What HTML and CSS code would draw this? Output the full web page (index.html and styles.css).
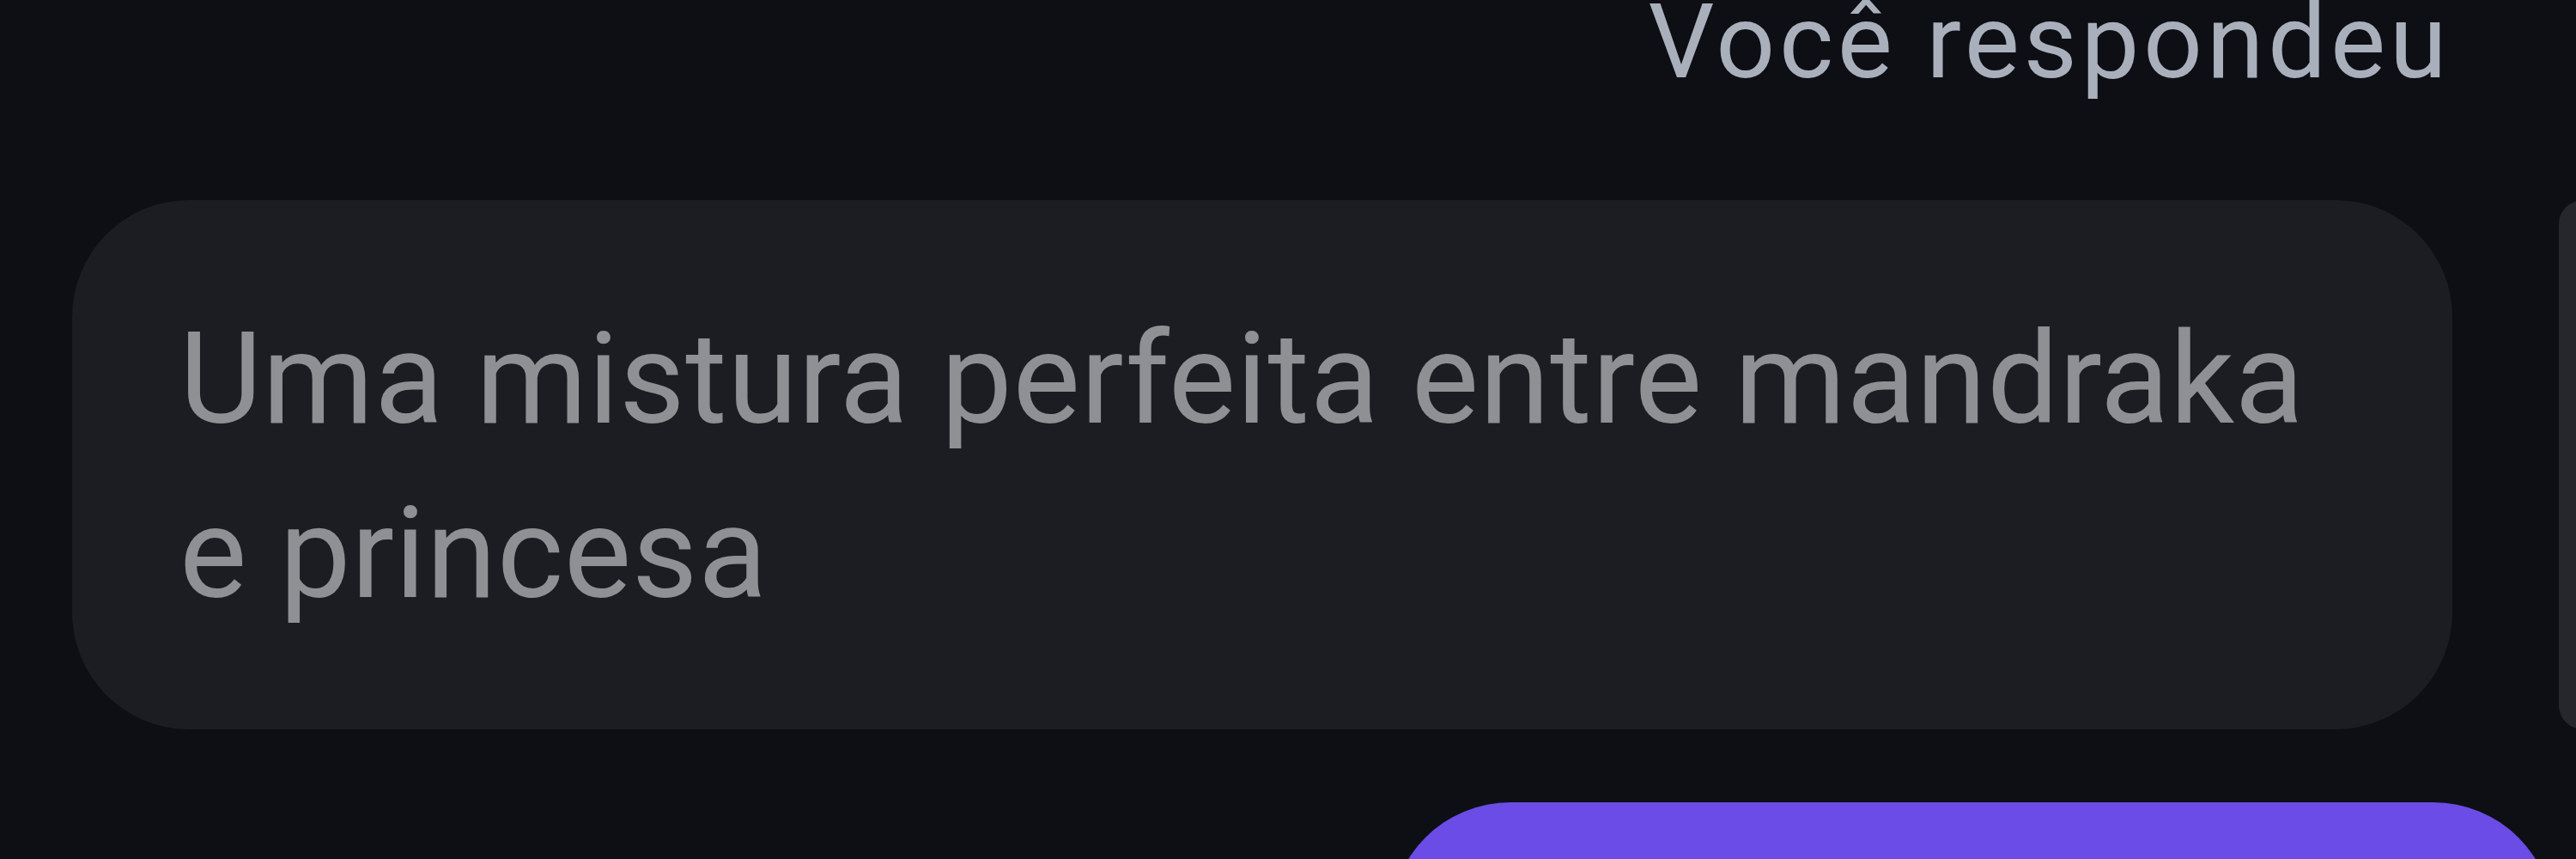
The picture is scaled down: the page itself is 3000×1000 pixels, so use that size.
FILE: index.html
```html
<!DOCTYPE html>
<html lang="pt-BR">
<head>
    <meta charset="UTF-8">
    <meta name="viewport" content="width=device-width, initial-scale=1.0">
    <title>Resposta</title>
    <link rel="stylesheet" href="styles.css">
</head>
<body>

    <div class="thread">
        <p class="answer-label">Você respondeu</p>

        <div class="answer-row">
            <div class="answer-card">
                Uma mistura perfeita entre mandraka e princesa
            </div>
            <div class="answer-card next"></div>
        </div>

        <div class="reply-bubble"></div>
    </div>

</body>
</html>
```

FILE: styles.css
```css
/* Estilos gerais */
body {
    margin: 0;
    background-color: #0d0f14;
    font-family: Roboto, 'Noto Sans', sans-serif;
    overflow: hidden;
    height: 1000px;
}

.thread {
    display: flex;
    flex-direction: column;
}

/* Rótulo acima da resposta */
.answer-label {
    margin: -23px 146px 0 0;
    text-align: right;
    font-size: 121px;
    line-height: 144px;
    letter-spacing: 4.6px;
    color: #a9b0bc;
}

.answer-row {
    display: flex;
    gap: 124px;
    margin-top: 112px;
    padding-left: 84px;
}

.answer-card {
    flex: 0 0 2772px;
    box-sizing: border-box;
    height: 616px;
    padding: 107px 125px 0 125px;
    border-radius: 136px;
    background: #1b1d22;
    color: #8e9094;
    font-size: 148px;
    line-height: 203px;
    letter-spacing: 0.6px;
}

/* Próximo cartão, cortado na borda */
.answer-card.next {
    flex: 0 0 400px;
    padding: 0;
    border-radius: 28px;
    background: #25272c;
}

/* Balão roxo da mensagem do usuário */
.reply-bubble {
    align-self: flex-end;
    width: 1355px;
    height: 280px;
    margin: 85px 26px 0 0;
    border-radius: 140px;
    background: #6b4ce6;
}
```
